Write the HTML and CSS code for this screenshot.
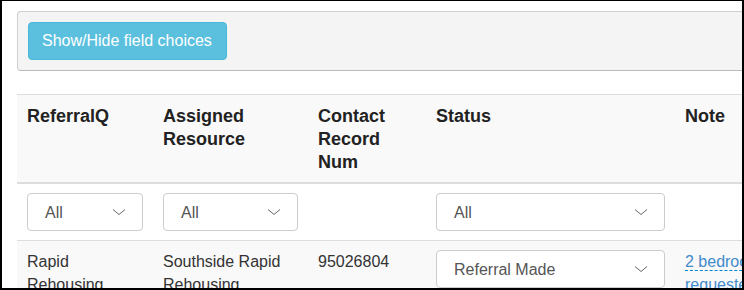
FILE: index.html
```html
<!DOCTYPE html>
<html lang="en">
<head>
    <meta charset="UTF-8">
    <title>Referrals</title>
    <link rel="stylesheet" href="styles.css">
</head>
<body>
    <div class="frame">
        <div class="well">
            <button class="btn btn-info">Show/Hide field choices</button>
        </div>

        <table class="grid">
            <colgroup>
                <col style="width: 136px">
                <col style="width: 155px">
                <col style="width: 118px">
                <col style="width: 249px">
                <col style="width: 120px">
            </colgroup>
            <thead>
                <tr class="head-row">
                    <th>ReferralQ</th>
                    <th>Assigned Resource</th>
                    <th>Contact Record Num</th>
                    <th>Status</th>
                    <th>Note</th>
                </tr>
                <tr class="filter-row">
                    <td>
                        <div class="select"><span>All</span><svg width="14" height="8" viewBox="0 0 14 8"><path d="M1 1.5 L7 6.5 L13 1.5" fill="none" stroke="#666" stroke-width="1"/></svg></div>
                    </td>
                    <td>
                        <div class="select"><span>All</span><svg width="14" height="8" viewBox="0 0 14 8"><path d="M1 1.5 L7 6.5 L13 1.5" fill="none" stroke="#666" stroke-width="1"/></svg></div>
                    </td>
                    <td></td>
                    <td>
                        <div class="select"><span>All</span><svg width="14" height="8" viewBox="0 0 14 8"><path d="M1 1.5 L7 6.5 L13 1.5" fill="none" stroke="#666" stroke-width="1"/></svg></div>
                    </td>
                    <td></td>
                </tr>
            </thead>
            <tbody>
                <tr class="data-row">
                    <td>Rapid Rehousing</td>
                    <td>Southside Rapid Rehousing</td>
                    <td>95026804</td>
                    <td>
                        <div class="select"><span>Referral Made</span><svg width="14" height="8" viewBox="0 0 14 8"><path d="M1 1.5 L7 6.5 L13 1.5" fill="none" stroke="#666" stroke-width="1"/></svg></div>
                    </td>
                    <td><a href="#" class="editable">2 bedroom requested</a></td>
                </tr>
            </tbody>
        </table>
    </div>
</body>
</html>
```

FILE: styles.css
```css
html, body {
    margin: 0;
    padding: 0;
    background: #fff;
}

body {
    font-family: "Liberation Sans", Arial, sans-serif;
    font-size: 16px;
    line-height: 23px;
    color: #333;
}

.frame {
    width: 744px;
    height: 290px;
    box-sizing: border-box;
    border: 2px solid #000;
    border-top-width: 1px;
    padding: 10px 0 0 15px;
    overflow: hidden;
}

.well {
    width: 900px;
    padding: 10px;
    background-color: #f4f4f4;
    border: 1px solid #cfcfcf;
    border-bottom-color: #bbb;
    border-radius: 4px;
}

.btn {
    font-family: inherit;
    font-size: 16px;
    line-height: 24px;
    padding: 6px 14px 6px 13px;
    border-radius: 4px;
    cursor: pointer;
}

.btn-info {
    background-color: #5bc0de;
    border: 1px solid #46b8da;
    color: #fff;
}

.grid {
    margin-top: 23px;
    border-collapse: collapse;
    table-layout: fixed;
    width: 778px;
    border-top: 1px solid #ddd;
}

.grid th,
.grid td {
    padding: 9px 10px;
    text-align: left;
    vertical-align: top;
}

.head-row {
    background-color: #f9f9f9;
}

.grid .head-row th {
    padding-top: 10px;
    padding-bottom: 8px;
    font-size: 18px;
    font-weight: bold;
    color: #222;
    border-bottom: 2px solid #ddd;
}

.filter-row td {
    border-bottom: 1px solid #ddd;
}

.data-row {
    background-color: #f9f9f9;
}

.select {
    display: flex;
    align-items: center;
    justify-content: space-between;
    height: 38px;
    box-sizing: border-box;
    padding: 0 16px 0 17px;
    background: #fff;
    border: 1px solid #ccc;
    border-radius: 4px;
    color: #555;
}

.select svg {
    display: block;
}

.editable {
    color: #428bca;
    text-decoration: none;
    border-bottom: 1px dashed #0088cc;
}
```
